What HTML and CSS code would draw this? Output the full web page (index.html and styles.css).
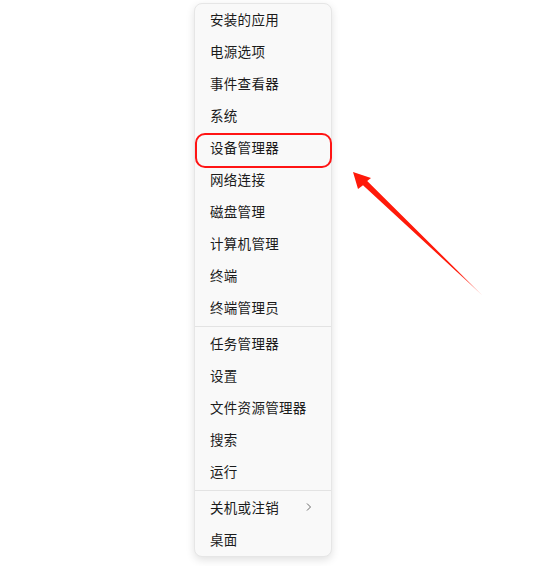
FILE: index.html
```html
<!DOCTYPE html>
<html lang="zh-CN">
<head>
<meta charset="utf-8">
<title>Menu</title>
<link rel="stylesheet" href="styles.css">
</head>
<body>
<div class="page">
  <div class="menu">
    <div class="item">安装的应用</div>
    <div class="item">电源选项</div>
    <div class="item">事件查看器</div>
    <div class="item">系统</div>
    <div class="item item-marked">设备管理器<span class="mark"></span></div>
    <div class="item">网络连接</div>
    <div class="item">磁盘管理</div>
    <div class="item">计算机管理</div>
    <div class="item">终端</div>
    <div class="item">终端管理员</div>
    <div class="sep"></div>
    <div class="item">任务管理器</div>
    <div class="item">设置</div>
    <div class="item">文件资源管理器</div>
    <div class="item">搜索</div>
    <div class="item">运行</div>
    <div class="sep"></div>
    <div class="item has-sub">关机或注销<svg class="chev" width="8" height="10" viewBox="0 0 8 10"><path d="M2 1.5 L5.5 5 L2 8.5" fill="none" stroke="#6a6a6a" stroke-width="1"/></svg></div>
    <div class="item">桌面</div>
  </div>
  <svg class="arrow" width="553" height="566" viewBox="0 0 553 566">
    <defs>
      <linearGradient id="fade" x1="353" y1="172" x2="483" y2="296" gradientUnits="userSpaceOnUse">
        <stop offset="0" stop-color="#ff1a0a"/>
        <stop offset="0.8" stop-color="#ff1a0a"/>
        <stop offset="1" stop-color="#ff1a0a" stop-opacity="0.35"/>
      </linearGradient>
    </defs>
    <polygon points="353,172 371,178 367.2,181 483,296 363,185.2 358,189" fill="url(#fade)"/>
  </svg>
</div>
</body>
</html>
```
FILE: styles.css
```css
html, body {
  margin: 0;
  padding: 0;
  background: #ffffff;
}
.page {
  position: relative;
  width: 553px;
  height: 566px;
  padding: 3px 0 0 194px;
  box-sizing: border-box;
  font-family: "Noto Sans CJK SC", "Noto Sans", sans-serif;
}
.menu {
  width: 138px;
  box-sizing: border-box;
  background: #f9f9f9;
  border: 1px solid #e6e6e6;
  border-radius: 8px;
  box-shadow: 0 3px 8px rgba(0, 0, 0, 0.12);
  padding: 0;
  display: flex;
  flex-direction: column;
}
.item {
  position: relative;
  height: 32px;
  box-sizing: border-box;
  display: flex;
  align-items: center;
  padding-left: 15px;
  padding-bottom: 2px;
  font-size: 13.5px;
  color: #1b1b1b;
  letter-spacing: 0.3px;
}
.has-sub .chev {
  position: absolute;
  left: 110px;
  top: 10px;
}
.sep {
  height: 1px;
  background: #e3e3e3;
  margin: 1.5px 0 1.5px;
}
.mark {
  position: absolute;
  left: 0;
  top: 1px;
  width: 137px;
  height: 35px;
  box-sizing: border-box;
  border: 2.5px solid #ff1414;
  border-radius: 10px;
}
.arrow {
  position: absolute;
  left: 0;
  top: 0;
  pointer-events: none;
}
```
